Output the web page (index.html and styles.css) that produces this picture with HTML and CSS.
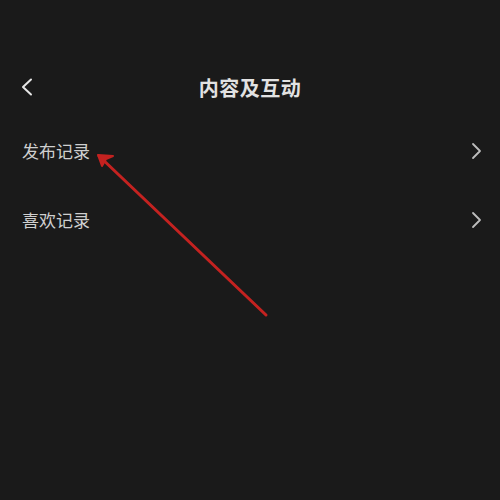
FILE: index.html
```html
<!DOCTYPE html>
<html lang="zh">
<head>
    <meta charset="UTF-8">
    <meta name="viewport" content="width=device-width, initial-scale=1.0">
    <title>内容及互动</title>
    <link rel="stylesheet" href="styles.css">
</head>
<body>
    <div class="page">
        <header class="topbar">
            <button class="back">
                <svg width="14" height="20" viewBox="0 0 14 20"><path d="M11 2.5 L3 10 L11 17.5" fill="none" stroke="#e6e6e6" stroke-width="2" stroke-linecap="round" stroke-linejoin="round"/></svg>
            </button>
            <h1>内容及互动</h1>
        </header>
        <ul class="menu">
            <li>
                <span>发布记录</span>
                <svg class="chev" width="12" height="20" viewBox="0 0 12 20"><path d="M3 3 L10 10 L3 17" fill="none" stroke="#bdbdbd" stroke-width="1.8" stroke-linecap="round" stroke-linejoin="round"/></svg>
            </li>
            <li>
                <span>喜欢记录</span>
                <svg class="chev" width="12" height="20" viewBox="0 0 12 20"><path d="M3 3 L10 10 L3 17" fill="none" stroke="#bdbdbd" stroke-width="1.8" stroke-linecap="round" stroke-linejoin="round"/></svg>
            </li>
        </ul>

        <!-- annotation arrow -->
        <svg class="pointer" width="500" height="500" viewBox="0 0 500 500">
            <path d="M266 315 L99 156" stroke="#c42220" stroke-width="3" stroke-linecap="round" fill="none"/>
            <path d="M98 155 L113 156 L106 159 L102 166 Z" fill="#c42220" stroke="#c42220" stroke-width="2" stroke-linejoin="round"/>
        </svg>
    </div>
</body>
</html>
```

FILE: styles.css
```css
body {
    margin: 0;
    background-color: #1a1a1a;
    font-family: "Noto Sans CJK SC", "Noto Sans", sans-serif;
    overflow: hidden;
}
.page {
    position: relative;
    width: 500px;
    height: 500px;
}
.topbar {
    position: relative;
    display: flex;
    justify-content: center;
    align-items: center;
    height: 40px;
    padding-top: 67px;
}
.topbar h1 {
    margin: 0;
    font-size: 20px;
    font-weight: bold;
    color: #e2e2e2;
    letter-spacing: 0.5px;
}
.topbar .back {
    position: absolute;
    left: 20px;
    top: 77px;
    background: none;
    border: none;
    padding: 0;
}
.menu {
    list-style: none;
    margin: 0;
    padding: 9px 0 0;
}
.menu li {
    display: flex;
    justify-content: space-between;
    align-items: center;
    height: 69px;
    padding: 0 18px 0 22px;
    color: #cfcfcf;
    font-size: 17px;
}
.pointer {
    position: absolute;
    left: 0;
    top: 0;
}
```
